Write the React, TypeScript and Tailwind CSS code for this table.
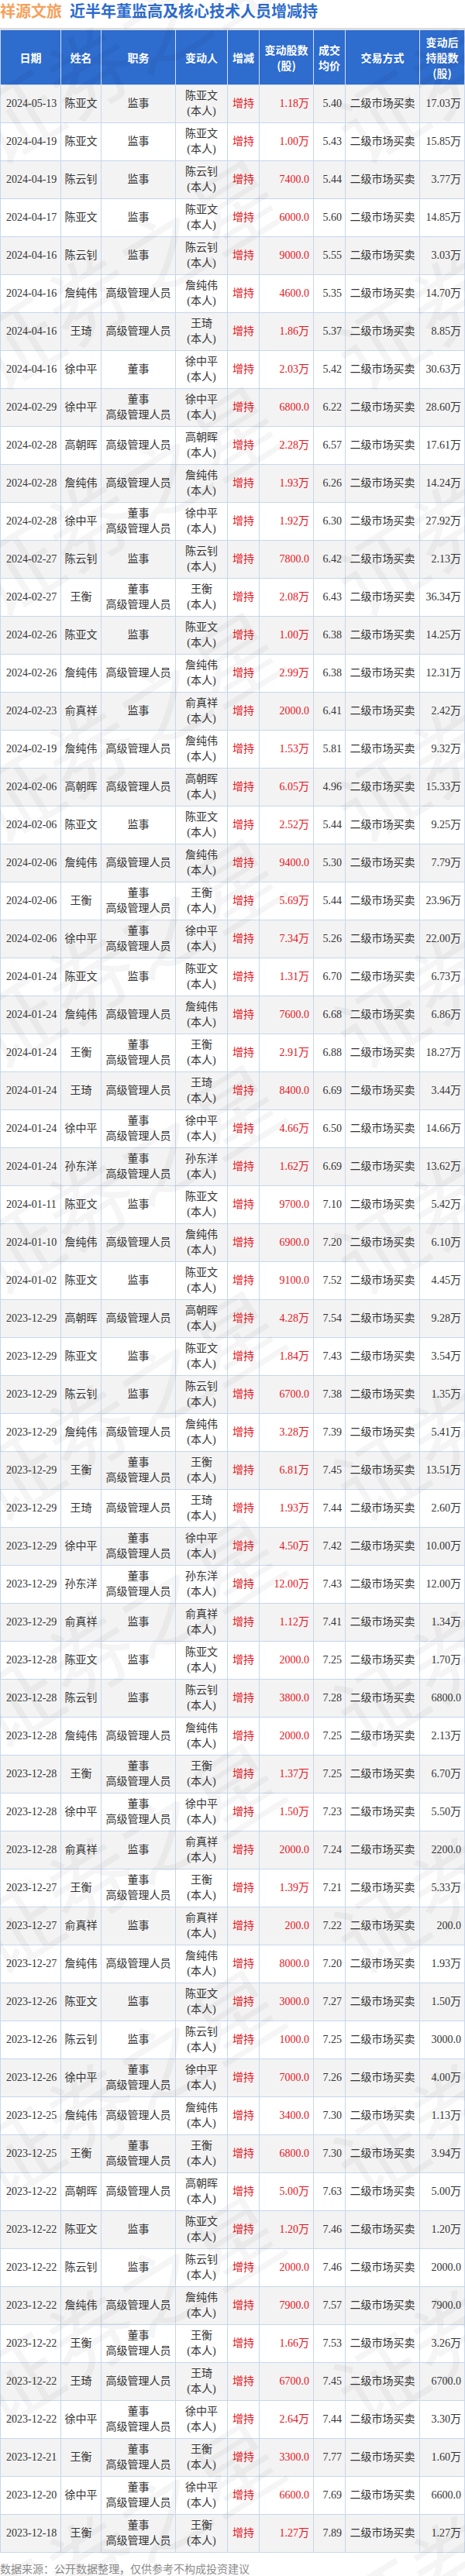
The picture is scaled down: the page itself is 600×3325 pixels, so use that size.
import React from "react";

// date, name, role, amount, price, holding after
// role: J 监事, G 高级管理人员, D 董事, DG 董事 + 高级管理人员
type Row = [string, string, string, string, string, string];

const rows: Row[] = [
  ["2024-05-13", "陈亚文", "J", "1.18万", "5.40", "17.03万"],
  ["2024-04-19", "陈亚文", "J", "1.00万", "5.43", "15.85万"],
  ["2024-04-19", "陈云钊", "J", "7400.0", "5.44", "3.77万"],
  ["2024-04-17", "陈亚文", "J", "6000.0", "5.60", "14.85万"],
  ["2024-04-16", "陈云钊", "J", "9000.0", "5.55", "3.03万"],
  ["2024-04-16", "詹纯伟", "G", "4600.0", "5.35", "14.70万"],
  ["2024-04-16", "王琦", "G", "1.86万", "5.37", "8.85万"],
  ["2024-04-16", "徐中平", "D", "2.03万", "5.42", "30.63万"],
  ["2024-02-29", "徐中平", "DG", "6800.0", "6.22", "28.60万"],
  ["2024-02-28", "高朝晖", "G", "2.28万", "6.57", "17.61万"],
  ["2024-02-28", "詹纯伟", "G", "1.93万", "6.26", "14.24万"],
  ["2024-02-28", "徐中平", "DG", "1.92万", "6.30", "27.92万"],
  ["2024-02-27", "陈云钊", "J", "7800.0", "6.42", "2.13万"],
  ["2024-02-27", "王衡", "DG", "2.08万", "6.43", "36.34万"],
  ["2024-02-26", "陈亚文", "J", "1.00万", "6.38", "14.25万"],
  ["2024-02-26", "詹纯伟", "G", "2.99万", "6.38", "12.31万"],
  ["2024-02-23", "俞真祥", "J", "2000.0", "6.41", "2.42万"],
  ["2024-02-19", "詹纯伟", "G", "1.53万", "5.81", "9.32万"],
  ["2024-02-06", "高朝晖", "G", "6.05万", "4.96", "15.33万"],
  ["2024-02-06", "陈亚文", "J", "2.52万", "5.44", "9.25万"],
  ["2024-02-06", "詹纯伟", "G", "9400.0", "5.30", "7.79万"],
  ["2024-02-06", "王衡", "DG", "5.69万", "5.44", "23.96万"],
  ["2024-02-06", "徐中平", "DG", "7.34万", "5.26", "22.00万"],
  ["2024-01-24", "陈亚文", "J", "1.31万", "6.70", "6.73万"],
  ["2024-01-24", "詹纯伟", "G", "7600.0", "6.68", "6.86万"],
  ["2024-01-24", "王衡", "DG", "2.91万", "6.88", "18.27万"],
  ["2024-01-24", "王琦", "G", "8400.0", "6.69", "3.44万"],
  ["2024-01-24", "徐中平", "DG", "4.66万", "6.50", "14.66万"],
  ["2024-01-24", "孙东洋", "DG", "1.62万", "6.69", "13.62万"],
  ["2024-01-11", "陈亚文", "J", "9700.0", "7.10", "5.42万"],
  ["2024-01-10", "詹纯伟", "G", "6900.0", "7.20", "6.10万"],
  ["2024-01-02", "陈亚文", "J", "9100.0", "7.52", "4.45万"],
  ["2023-12-29", "高朝晖", "G", "4.28万", "7.54", "9.28万"],
  ["2023-12-29", "陈亚文", "J", "1.84万", "7.43", "3.54万"],
  ["2023-12-29", "陈云钊", "J", "6700.0", "7.38", "1.35万"],
  ["2023-12-29", "詹纯伟", "G", "3.28万", "7.39", "5.41万"],
  ["2023-12-29", "王衡", "DG", "6.81万", "7.45", "13.51万"],
  ["2023-12-29", "王琦", "G", "1.93万", "7.44", "2.60万"],
  ["2023-12-29", "徐中平", "DG", "4.50万", "7.42", "10.00万"],
  ["2023-12-29", "孙东洋", "DG", "12.00万", "7.43", "12.00万"],
  ["2023-12-29", "俞真祥", "J", "1.12万", "7.41", "1.34万"],
  ["2023-12-28", "陈亚文", "J", "2000.0", "7.25", "1.70万"],
  ["2023-12-28", "陈云钊", "J", "3800.0", "7.28", "6800.0"],
  ["2023-12-28", "詹纯伟", "G", "2000.0", "7.25", "2.13万"],
  ["2023-12-28", "王衡", "DG", "1.37万", "7.25", "6.70万"],
  ["2023-12-28", "徐中平", "DG", "1.50万", "7.23", "5.50万"],
  ["2023-12-28", "俞真祥", "J", "2000.0", "7.24", "2200.0"],
  ["2023-12-27", "王衡", "DG", "1.39万", "7.21", "5.33万"],
  ["2023-12-27", "俞真祥", "J", "200.0", "7.22", "200.0"],
  ["2023-12-27", "詹纯伟", "G", "8000.0", "7.20", "1.93万"],
  ["2023-12-26", "陈亚文", "J", "3000.0", "7.27", "1.50万"],
  ["2023-12-26", "陈云钊", "J", "1000.0", "7.25", "3000.0"],
  ["2023-12-26", "徐中平", "DG", "7000.0", "7.26", "4.00万"],
  ["2023-12-25", "詹纯伟", "G", "3400.0", "7.30", "1.13万"],
  ["2023-12-25", "王衡", "DG", "6800.0", "7.30", "3.94万"],
  ["2023-12-22", "高朝晖", "G", "5.00万", "7.63", "5.00万"],
  ["2023-12-22", "陈亚文", "J", "1.20万", "7.46", "1.20万"],
  ["2023-12-22", "陈云钊", "J", "2000.0", "7.46", "2000.0"],
  ["2023-12-22", "詹纯伟", "G", "7900.0", "7.57", "7900.0"],
  ["2023-12-22", "王衡", "DG", "1.66万", "7.53", "3.26万"],
  ["2023-12-22", "王琦", "G", "6700.0", "7.45", "6700.0"],
  ["2023-12-22", "徐中平", "DG", "2.64万", "7.44", "3.30万"],
  ["2023-12-21", "王衡", "DG", "3300.0", "7.77", "1.60万"],
  ["2023-12-20", "徐中平", "DG", "6600.0", "7.69", "6600.0"],
  ["2023-12-18", "王衡", "DG", "1.27万", "7.89", "1.27万"],
];

const roleLines: Record<string, string[]> = {
  J: ["监事"],
  G: ["高级管理人员"],
  D: ["董事"],
  DG: ["董事", "高级管理人员"],
};

const cols = "grid grid-cols-[78px_52px_96px_67px_41px_70px_41px_96px_57px]";
const cell = "flex flex-col justify-center border-r border-[#c6d7ec] leading-5";

const HeadCell = ({ lines, last }: { lines: string[]; last?: boolean }) => (
  <div
    className={`flex flex-col items-center justify-center leading-5 ${
      last ? "" : "border-r border-[#d3e0f2]"
    }`}
  >
    {lines.map((l) => (
      <span key={l}>{l}</span>
    ))}
  </div>
);

const App = () => {
  // faint "证券之星" watermark tiles
  const marks: { x: number; y: number }[] = [];
  for (let r = 0; r < 12; r++) {
    for (let c = 0; c < 2; c++) {
      marks.push({ x: -30 + c * 470, y: 120 + r * 292 });
    }
  }

  return (
    <div className="relative w-[600px] overflow-hidden bg-white font-['Liberation_Serif','Noto_Sans_CJK_SC',serif] text-[14px] text-[#333]">
      {/* Title */}
      <div className="flex h-[36px] items-start gap-[10px] font-['Noto_Sans_CJK_SC',sans-serif] text-[20px] font-bold leading-[28px]">
        <span className="text-[#f4a25c]">祥源文旅</span>
        <span className="text-[#2e6cce]">近半年董监高及核心技术人员增减持</span>
      </div>

      {/* Table */}
      <div className="border-t-[3px] border-[#dcdcdc]">
        <div className="border-x border-[#c6d7ec]">
          <div
            className={`${cols} h-[71px] border-b border-[#c6d7ec] bg-[#2e6cce] font-['Noto_Sans_CJK_SC',sans-serif] font-bold text-white`}
          >
            <HeadCell lines={["日期"]} />
            <HeadCell lines={["姓名"]} />
            <HeadCell lines={["职务"]} />
            <HeadCell lines={["变动人"]} />
            <HeadCell lines={["增减"]} />
            <HeadCell lines={["变动股数", "(股)"]} />
            <HeadCell lines={["成交", "均价"]} />
            <HeadCell lines={["交易方式"]} />
            <HeadCell lines={["变动后", "持股数", "(股)"]} last />
          </div>

          {rows.map(([date, name, role, amount, price, after], i) => (
            <div
              key={i}
              className={`${cols} h-[49px] border-b border-[#c6d7ec] ${
                i % 2 === 0 ? "bg-[#f3f3f3]" : "bg-white"
              }`}
            >
              <div className={`${cell} items-start pl-[7px]`}>{date}</div>
              <div className={`${cell} items-center`}>{name}</div>
              <div className={`${cell} items-center`}>
                {roleLines[role].map((l) => (
                  <span key={l}>{l}</span>
                ))}
              </div>
              <div className={`${cell} items-center`}>
                <span>{name}</span>
                <span>(本人)</span>
              </div>
              <div className={`${cell} items-center text-[#e8141c]`}>增持</div>
              <div className={`${cell} items-end pr-[5px] text-[#e8141c]`}>{amount}</div>
              <div className={`${cell} items-end pr-[4px]`}>{price}</div>
              <div className={`${cell} items-center`}>二级市场买卖</div>
              <div className="flex flex-col items-end justify-center pr-[4px] leading-5">{after}</div>
            </div>
          ))}
        </div>
      </div>

      {/* Footer */}
      <p className="pt-[10px] font-['Noto_Sans_CJK_SC',sans-serif] leading-5 text-[#8c8c8c]">
        数据来源：公开数据整理，仅供参考不构成投资建议
      </p>

      {/* Watermark */}
      <div className="pointer-events-none absolute inset-0">
        {marks.map((m, i) => (
          <span
            key={i}
            className="absolute origin-left -rotate-[32deg] whitespace-nowrap font-['Noto_Sans_CJK_SC',sans-serif] text-[112px] leading-none text-black/[0.04]"
            style={{ left: m.x, top: m.y }}
          >
            证券之星
          </span>
        ))}
      </div>
    </div>
  );
};

export default App;
